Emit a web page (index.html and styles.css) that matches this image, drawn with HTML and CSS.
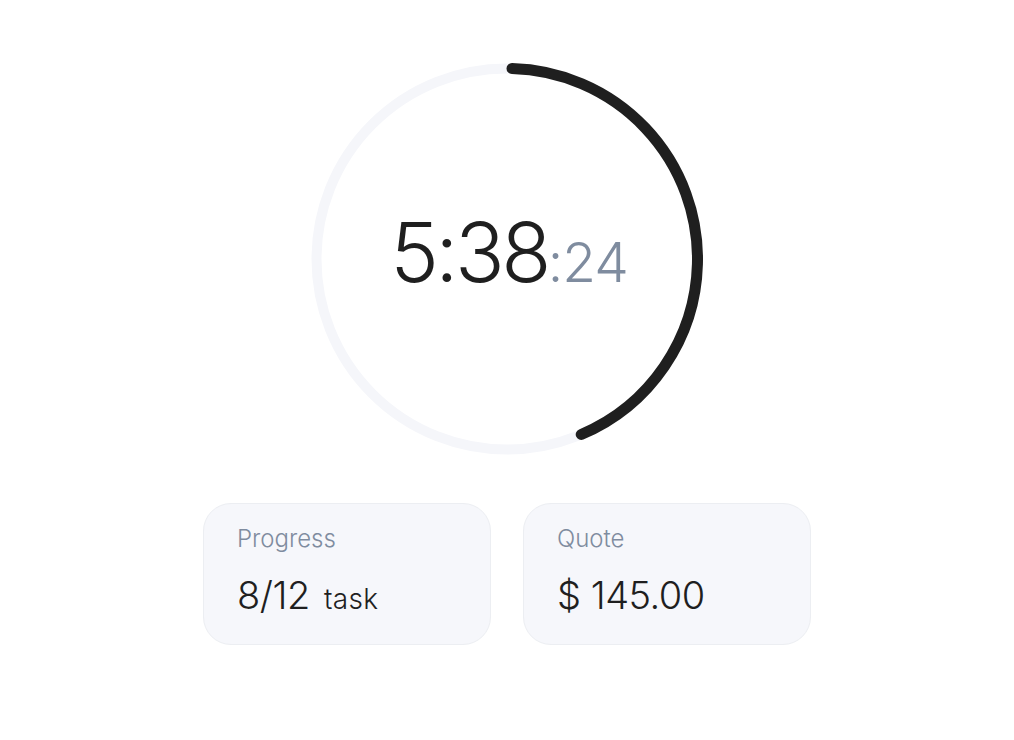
FILE: index.html
```html
<html>
  <head>
    <link rel="stylesheet" href="styles.css">
    <title>Timer</title>
  </head>
  <body>
    <div class="timer">
      <div class="dial">
        <svg class="ring" width="392" height="392" viewBox="0 0 392 392">
          <circle class="track" cx="196" cy="196" r="190.5"/>
          <circle class="bar" cx="196" cy="196" r="190.5"
            stroke-dasharray="517 1197" transform="rotate(-88.5 196 196)"/>
        </svg>
        <div class="time">5:38<span class="secs">:24</span></div>
      </div>
      <div class="cards">
        <div class="card">
          <div class="label">Progress</div>
          <div class="value">8/12 <small>task</small></div>
        </div>
        <div class="card">
          <div class="label">Quote</div>
          <div class="value">$ 145.00</div>
        </div>
      </div>
    </div>
  </body>
</html>
```
FILE: styles.css
```css
body {
  margin: 0;
  background: #fff;
  font-family: Inter, "Noto Sans", sans-serif;
  color: #1f1f1f;
}

.timer {
  display: flex;
  flex-direction: column;
  align-items: center;
  padding-top: 63px;
}

.dial {
  display: grid;
  place-items: center;
  width: 392px;
  height: 392px;
}
.dial > * {
  grid-area: 1 / 1;
}

.track {
  fill: none;
  stroke: #f5f6fa;
  stroke-width: 10;
}
.bar {
  fill: none;
  stroke: #1f1f1f;
  stroke-width: 11;
  stroke-linecap: round;
}

.time {
  font-size: 82px;
  font-weight: 300;
  letter-spacing: -3.5px;
  padding-left: 4px;
  margin-bottom: 14px;
}
.time .secs {
  font-size: 55px;
  color: #7f8c9f;
  letter-spacing: -1px;
}

.cards {
  display: flex;
  gap: 32px;
  margin-top: 48px;
}

.card {
  width: 288px;
  height: 142px;
  box-sizing: border-box;
  padding: 20px 33px;
  background: #f6f7fb;
  border: 1px solid #eceef2;
  border-radius: 28px;
}

.label {
  font-size: 24px;
  color: #7f8c9f;
  font-weight: 300;
}

.value {
  margin-top: 19px;
  font-size: 38px;
  font-weight: 300;
  letter-spacing: -0.5px;
}
.value small {
  font-size: 28px;
  letter-spacing: 0.3px;
  margin-left: 4px;
}
```
